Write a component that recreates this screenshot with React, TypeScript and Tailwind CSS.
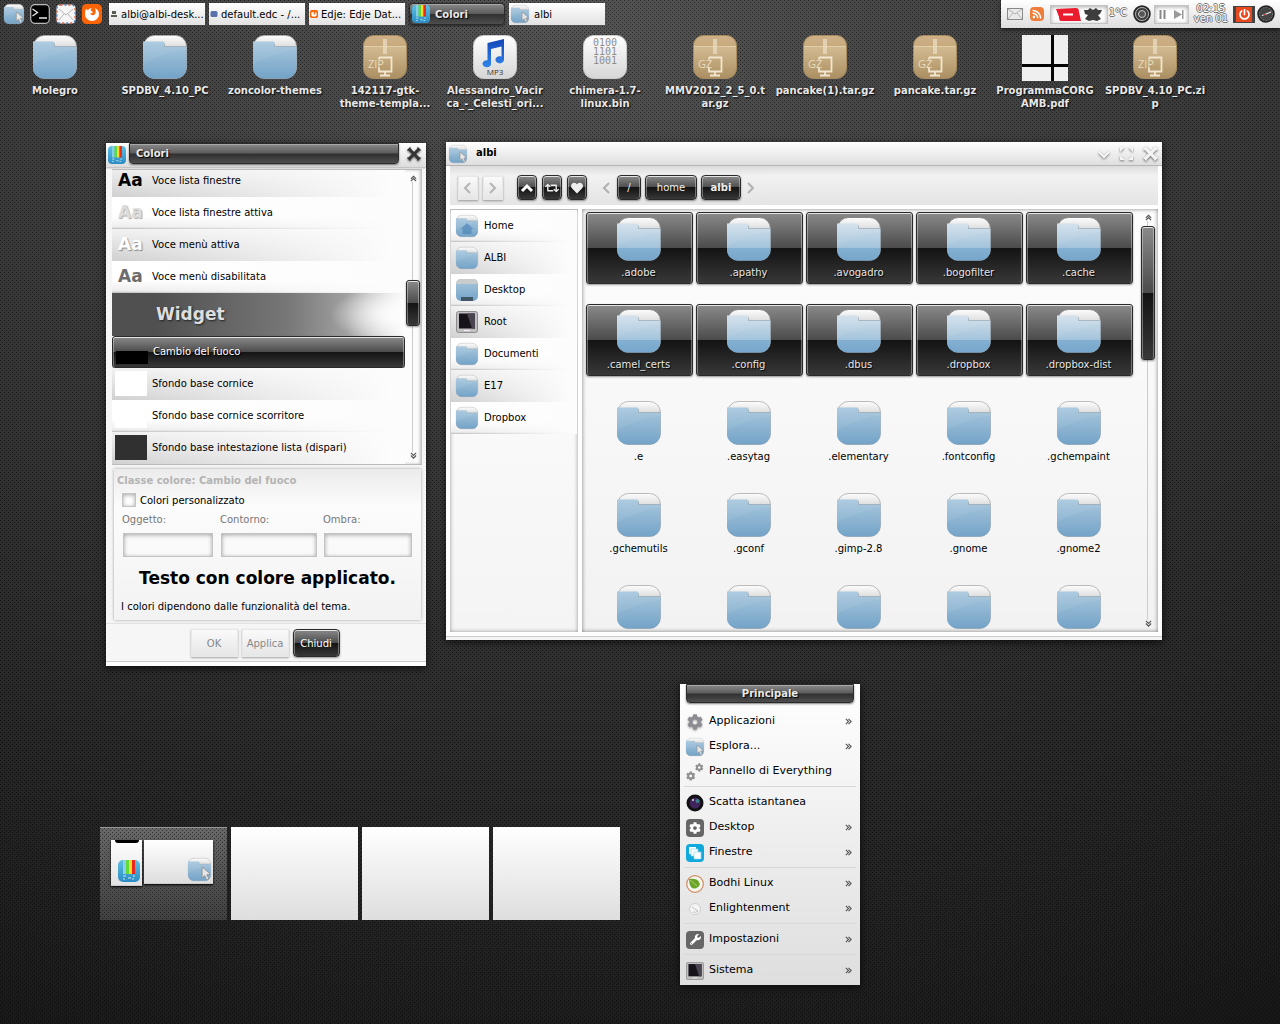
import { useState, type ReactNode } from 'react'
import clsx from 'clsx'
import { FaCog, FaHeart, FaPowerOff, FaRss, FaWrench, FaRetweet } from 'react-icons/fa'

type DesktopFile = { lines: string[]; icon: ReactNode }
type MenuEntry = { label: string; icon: ReactNode; sub?: boolean }

const GLOSS =
  'border border-[#2a2a2a] bg-[linear-gradient(#8a8a8a,#4b4b4b_50%,#131313_50%,#383838)] shadow-[inset_0_1px_0_#e4e4e4,inset_1px_0_0_rgba(255,255,255,0.35),inset_-1px_0_0_rgba(255,255,255,0.35),0_1px_2px_rgba(0,0,0,0.4)]'
const TITLE_GLOSS =
  'border border-[#2a2a2a] bg-[linear-gradient(#8a8a8a,#5c5c5c_48%,#303030_52%,#4e4e4e)] shadow-[inset_0_1px_0_#a8a8a8,0_1px_2px_rgba(0,0,0,0.5)] text-[#eaeaea] [text-shadow:1px_1px_1px_#000]'
const WELL = 'border border-[#c4c4c4] shadow-[inset_0_1px_4px_rgba(0,0,0,0.35)]'
const FLAT_BUTTON =
  'border border-[#e8e8e8] bg-linear-to-b from-[#fafafa] to-[#e6e6e6] shadow-[0_1px_2px_rgba(0,0,0,0.35)]'
const ROW_DARK = 'bg-[linear-gradient(to_right,transparent,#fcfcfc_95%),linear-gradient(#f2f2f2,#d0d0d0)]'
const ROW_LIGHT = 'bg-[linear-gradient(to_right,transparent,#fcfcfc_95%),linear-gradient(#ffffff_60%,#ececec_94%,#b8b8b8)]'

/* ---------- icons ---------- */

function Defs() {
  return (
    <svg width="0" height="0" className="absolute" aria-hidden="true">
      <defs>
        <linearGradient id="flap" x1="0" y1="0" x2="0" y2="1">
          <stop offset="0" stopColor="#fdfdfd" />
          <stop offset=".3" stopColor="#d9d9d9" />
          <stop offset="1" stopColor="#bbb" />
        </linearGradient>
        <linearGradient id="blue" x1="0" y1="0" x2="0" y2="1">
          <stop offset="0" stopColor="#a9c8de" />
          <stop offset="1" stopColor="#74a3c7" />
        </linearGradient>
        <linearGradient id="blueLit" x1="0" y1="0" x2="0" y2="1">
          <stop offset="0" stopColor="#d3e1ec" />
          <stop offset=".66" stopColor="#a3c3db" />
          <stop offset=".67" stopColor="#83b0d2" />
          <stop offset="1" stopColor="#76a6cb" />
        </linearGradient>
        <linearGradient id="box" x1="0" y1="0" x2="0" y2="1">
          <stop offset="0" stopColor="#cdb088" />
          <stop offset=".25" stopColor="#c9aa7f" />
          <stop offset=".27" stopColor="#d2ba90" />
          <stop offset="1" stopColor="#ab8f62" />
        </linearGradient>
        <linearGradient id="paper" x1="0" y1="0" x2="0" y2="1">
          <stop offset="0" stopColor="#fff" />
          <stop offset="1" stopColor="#d6d6d6" />
        </linearGradient>
        <linearGradient id="note" x1="0" y1="0" x2="0" y2="1">
          <stop offset="0" stopColor="#1445b8" />
          <stop offset="1" stopColor="#2f86ea" />
        </linearGradient>
        <linearGradient id="sky" x1="0" y1="0" x2="0" y2="1">
          <stop offset="0" stopColor="#5cc0e2" />
          <stop offset="1" stopColor="#2c8cc4" />
        </linearGradient>
      </defs>
    </svg>
  )
}

const BODY = 'M0 6.500H20q1.500 0 1.500 2v3h22V33A10.500 10.500 0 0 1 33 43.500H11A10.500 10.500 0 0 1 0 33Z'

function Folder({ size = 44, lit = false, children }: { size?: number; lit?: boolean; children?: ReactNode }) {
  return (
    <svg width={size} height={size} viewBox="0 0 44 44" className="shrink-0 overflow-visible">
      <rect x=".5" y=".5" width="43" height="43" rx="11" fill="url(#flap)" stroke={lit ? '#777' : '#a9a9a9'} strokeWidth=".8" />
      <path d={BODY} fill={lit ? 'url(#blueLit)' : 'url(#blue)'} />
      <path d="M0 6.500H20q1.500 0 1.500 2v3h22v3Q24 17 0 29Z" fill="#fff" opacity=".06" />
      <path d="M21.500 8.500v3h22" fill="none" stroke="#8b9aa5" strokeWidth=".8" opacity=".7" />
      {children}
    </svg>
  )
}

function FolderCursor({ size = 20 }: { size?: number }) {
  return (
    <Folder size={size}>
      <path d="M27 17v21l5-4.500 4 8.500 4-2-4-8 7-1Z" fill="#e6e6e6" stroke="#8c8c8c" strokeWidth="1.500" />
    </Folder>
  )
}

function Archive({ kind }: { kind: string }) {
  return (
    <svg width="44" height="44" viewBox="0 0 44 44" className="font-normal [text-shadow:none]">
      <rect x=".5" y=".5" width="43" height="43" rx="10" fill="url(#box)" stroke="#a88c60" />
      <path d="M1 11.500h42" stroke="#e2cda8" strokeWidth="1" />
      <rect x="20" y="4" width="4" height="15" fill="#eadcc2" opacity=".75" />
      <path d="M16 22.500h12.500v14H16v-4M16 22.500v2M22 36.500v3M17 40.500h10" fill="none" stroke="#f2e6cf" strokeWidth="1.800" />
      <text x="5" y="33" fontFamily="Open Sans" fontSize="11" fill="#eadbbd">{kind}</text>
    </svg>
  )
}

function Mp3() {
  return (
    <svg width="44" height="44" viewBox="0 0 44 44" className="font-normal [text-shadow:none]">
      <rect x=".5" y=".5" width="43" height="43" rx="10" fill="url(#paper)" stroke="#ccc" />
      <path d="M14.500 8 31 4v20.500a4.300 3.600 0 1 1-2.500-3V11.500L18 14v14a4.300 3.600 0 1 1-3.500-2.800Z" fill="url(#note)" />
      <text x="22" y="40" textAnchor="middle" fontFamily="Open Sans" fontSize="8" fill="#333">MP3</text>
    </svg>
  )
}

function Binary() {
  return (
    <svg width="44" height="44" viewBox="0 0 44 44" className="font-normal [text-shadow:none]">
      <rect x=".5" y=".5" width="43" height="43" rx="10" fill="url(#paper)" stroke="#ccc" />
      <g fontFamily="DejaVu Sans Mono" fontSize="10" fill="#8e8e8e" textAnchor="middle">
        <text x="22" y="11">0100</text>
        <text x="22" y="20">1101</text>
        <text x="22" y="29">1001</text>
      </g>
    </svg>
  )
}

function PdfPreview() {
  return (
    <svg width="46" height="46" viewBox="0 0 46 46">
      <path d="M0 0h46v46H0Z" fill="#050505" />
      <path d="M0 0h29v29H0ZM32 0h14v29H32ZM0 32h29v14H0ZM32 32h14v14H32Z" fill="#efefef" />
    </svg>
  )
}

function ColorsIcon({ size = 20 }: { size?: number }) {
  return (
    <svg width={size} height={size} viewBox="0 0 22 22" className="shrink-0">
      <rect width="22" height="22" rx="5" fill="url(#sky)" />
      <path d="M5 0h3v14H5Z" fill="#8ed0e8" />
      <path d="M8 0h3v14H8Z" fill="#5fdc3c" />
      <path d="M11 0h3v14h-3Z" fill="#ffd52e" />
      <path d="M14 0h3v14h-3Z" fill="#e8291d" />
      <path d="M5 16h3M10 18h3M14 19h2M5 19h2M15 16h2" stroke="#bfe6f5" />
    </svg>
  )
}

function Terminal() {
  return (
    <svg width="20" height="20" viewBox="0 0 20 20">
      <rect x=".7" y=".7" width="18.600" height="18.600" rx="4" fill="#000" stroke="#bbb" strokeWidth="1.200" />
      <path d="m2.500 5 5 3.500-5 3.500M9 14h8" fill="none" stroke="#e8e8e8" strokeWidth="1.300" />
    </svg>
  )
}

function Mail() {
  return (
    <svg width="20" height="20" viewBox="0 0 20 20">
      <rect x=".5" y=".5" width="19" height="19" rx="4" fill="#f6f6f6" />
      <rect x="1" y="1" width="18" height="18" rx="3.500" fill="none" stroke="#e4573c" strokeWidth="1.300" strokeDasharray="2 6" />
      <rect x="1" y="1" width="18" height="18" rx="3.500" fill="none" stroke="#4d86c8" strokeWidth="1.300" strokeDasharray="2 6" strokeDashoffset="4" />
      <path d="m3 5 7 6 7-6M3 16l5-6M17 16l-5-6" fill="none" stroke="#b5b5b5" />
    </svg>
  )
}

function Firefox({ size = 20 }: { size?: number }) {
  return (
    <svg width={size} height={size} viewBox="0 0 20 20" className="shrink-0">
      <rect width="20" height="20" rx="4.500" fill="#fb6508" />
      <path d="M4 5q1 1 2 1 2-2 4-2-2 1-1 3l2 1q-1 2-3 1 1 3 4 2 3-2 1-7 4 2 4 6a7 7 0 0 1-14 0Q3 7 4 5Z" fill="#fff" />
    </svg>
  )
}

function Monitor({ size = 22 }: { size?: number }) {
  return (
    <svg width={size} height={size} viewBox="0 0 22 22">
      <rect x=".5" y=".5" width="21" height="21" rx="2" fill="#c2bfc2" stroke="#8e8e8e" />
      <rect x="3" y="2.500" width="16" height="15" fill="#17131b" />
      <path d="M11 2.500h8v15h-3Z" fill="#4a4350" />
      <path d="M8 19.500h6" stroke="#eee" />
    </svg>
  )
}

function DesktopIcon() {
  return (
    <svg width="22" height="22" viewBox="0 0 22 22">
      <rect width="22" height="22" rx="5" fill="url(#blue)" />
      <path d="M0 5q0-5 5-5h12q5 0 5 5Z" fill="#c9cccd" />
      <rect x="5" y="18" width="12" height="4" fill="#3f5668" />
    </svg>
  )
}

function HomeFolder() {
  return (
    <Folder size={22}>
      <path d="M22 16 9 28h4v10h18V28h4Z" fill="#5088b8" opacity=".7" />
    </Folder>
  )
}

function Cross({ color, size = 14 }: { color: string; size?: number }) {
  return (
    <svg width={size} height={size} viewBox="0 0 14 14" className="drop-shadow-[0_1px_1px_rgba(0,0,0,0.6)]">
      <path d="M2 2l10 10M12 2 2 12" stroke={color} strokeWidth="3" />
      <path d="M.5 3.500 3.500.5M10.500.5l3 3M.5 10.500l3 3M10.500 13.500l3-3" stroke={color} strokeWidth="1.300" />
    </svg>
  )
}

function Chevron({ dir, className = '' }: { dir: 'left' | 'right' | 'down'; className?: string }) {
  const d = { left: 'M8 1 3 6l5 5', right: 'M3 1l5 5-5 5', down: 'M1 4l5 5 5-5' }[dir]
  return (
    <svg width="12" height="12" viewBox="0 0 12 12" className={className}>
      <path d={d} fill="none" stroke="currentColor" strokeWidth="2" />
    </svg>
  )
}

function DoubleArrow({ dir }: { dir: 'up' | 'down' | 'right' }) {
  const d = { up: 'M1 4.500 4 1.500l3 3M1 7 4 4l3 3', down: 'M1 1l3 3 3-3M1 4l3 3 3-3', right: 'M1 1l3 3-3 3M4 1l3 3-3 3' }[dir]
  return (
    <svg width="7" height="7" viewBox="0 0 8 8" className="shrink-0">
      <path d={d} fill="none" stroke="#555" strokeWidth="1.300" />
    </svg>
  )
}

function Badge({ className, children }: { className: string; children: ReactNode }) {
  return <span className={clsx('flex size-[18px] items-center justify-center text-white', className)}>{children}</span>
}

/* ---------- panel ---------- */

const TASKS: { label: string; icon: ReactNode }[] = [
  {
    label: 'albi@albi-desk...',
    icon: <svg width="8" height="8" viewBox="0 0 8 8"><path d="M2 1h4v3H2ZM1 5h6v2H1Z" fill="#555c50" /></svg>,
  },
  {
    label: 'default.edc - /...',
    icon: <svg width="8" height="8" viewBox="0 0 8 8"><rect x=".5" y="1" width="7" height="6" rx="1.500" fill="#5a72ac" /></svg>,
  },
  { label: 'Edje: Edje Dat...', icon: <Firefox size={8} /> },
  { label: 'Colori', icon: <ColorsIcon size={18} /> },
  { label: 'albi', icon: <FolderCursor size={18} /> },
]

function TaskBar() {
  const [active, setActive] = useState('Colori')
  return (
    <nav className="flex items-center gap-[6px] pt-[3px] pl-[4px]">
      <button aria-label="File manager"><FolderCursor /></button>
      <button aria-label="Terminale"><Terminal /></button>
      <button aria-label="Posta"><Mail /></button>
      <button aria-label="Firefox"><Firefox /></button>
      <div className="flex gap-1 pl-px">
        {TASKS.map(({ label, icon }, i) => (
          <button
            key={label}
            onClick={() => setActive(label)}
            className={clsx(
              'flex h-[22px] w-24 items-center overflow-hidden whitespace-nowrap',
              i < 3 ? 'gap-[3px] pl-px' : 'gap-[5px] pl-[2px]',
              active === label ? [TITLE_GLOSS, 'rounded font-bold'] : 'bg-linear-to-b from-white to-[#e2e2e2]'
            )}
          >
            {icon}
            {label}
          </button>
        ))}
      </div>
    </nav>
  )
}

function Tray() {
  const outlined = 'text-white [text-shadow:1px_0_#777,-1px_0_#777,0_1px_#777,0_-1px_#777]'
  return (
    <div className="flex h-7 items-center bg-linear-to-b from-white to-[#dedede] pl-[6px] pr-[5px] shadow-[0_2px_4px_rgba(0,0,0,0.5)]">
      <svg width="16" height="12" viewBox="0 0 16 12">
        <rect x=".5" y=".5" width="15" height="11" fill="#e9e9e9" stroke="#8a8a8a" />
        <path d="m1 1 7 5 7-5M1 11l5-6M15 11l-5-6" fill="none" stroke="#b3b3b3" />
      </svg>
      <span className="ml-[7px] flex size-[14px] items-center justify-center rounded-sm bg-[#ef7d3a] text-white">
        <FaRss size={10} />
      </span>
      <div className={clsx('ml-[6px] flex h-[19px] w-[58px] items-center justify-center gap-[3px] bg-white', WELL)}>
        <svg width="25" height="13" viewBox="0 0 25 13">
          <path d="M0 1 20 0q3 0 3 4l2 9H5Q3 13 3 9Z" fill="#ea1c2e" />
          <path d="M7 6.500h10" stroke="#fff" strokeWidth="2" />
        </svg>
        <svg width="18" height="13" viewBox="0 0 18 13">
          <path d="M0 2h4l2-2 3 2 3-2 2 2h4l-2 4-2 1 3 4-4 2-4-1-4 1-4-2 3-4-3-1Z" fill="#3d3d3d" />
        </svg>
      </div>
      <span className={clsx('ml-px pb-[3px]', outlined)}>1°C</span>
      <svg width="18" height="18" viewBox="0 0 18 18" className="ml-[6px]">
        <circle cx="9" cy="9" r="8" fill="#3a3a3a" stroke="#222" strokeWidth="1.500" />
        <circle cx="9" cy="9" r="6.500" fill="none" stroke="#b5b5b5" />
        <circle cx="9" cy="9" r="3.500" fill="#555" stroke="#d0d0d0" />
      </svg>
      <div className={clsx('ml-[3px] flex h-[19px] w-[35px] items-center justify-center gap-[8px] bg-white', WELL)}>
        <svg width="7" height="9" viewBox="0 0 7 9"><path d="M1.500 0v9M5.500 0v9" stroke="#888" strokeWidth="2" /></svg>
        <svg width="10" height="9" viewBox="0 0 10 9"><path d="m0 0 8 4.500L0 9ZM8 0h1.500v9H8Z" fill="#999" /></svg>
      </div>
      <div className={clsx('ml-1 flex w-9 flex-col items-center whitespace-nowrap leading-[10px]', outlined)}>
        <span>02:15</span>
        <span>ven 01</span>
      </div>
      <button aria-label="Spegni" className="ml-[4px] flex h-[17px] w-[22px] items-center justify-center bg-[#444]">
        <span className="flex h-[15px] w-[16px] items-center justify-center bg-[#e8491f] text-white"><FaPowerOff size={11} /></span>
      </button>
      <svg width="18" height="18" viewBox="0 0 18 18" className="ml-[2px]">
        <circle cx="9" cy="9" r="8" fill="#444" stroke="#222" strokeWidth="1.500" />
        <circle cx="9" cy="9" r="6.500" fill="none" stroke="#888" strokeDasharray="1 2" />
        <path d="M5 10.500 9 9l5-2" stroke="#eee" strokeWidth="1.300" />
        <path d="M9 9 6 10" stroke="#d33" />
      </svg>
    </div>
  )
}

/* ---------- desktop ---------- */

const FILES: DesktopFile[] = [
  { lines: ['Molegro'], icon: <Folder /> },
  { lines: ['SPDBV_4.10_PC'], icon: <Folder /> },
  { lines: ['zoncolor-themes'], icon: <Folder /> },
  { lines: ['142117-gtk-', 'theme-templa...'], icon: <Archive kind="ZIP" /> },
  { lines: ['Alessandro_Vacir', 'ca_-_Celesti_ori...'], icon: <Mp3 /> },
  { lines: ['chimera-1.7-', 'linux.bin'], icon: <Binary /> },
  { lines: ['MMV2012_2_5_0.t', 'ar.gz'], icon: <Archive kind="GZ" /> },
  { lines: ['pancake(1).tar.gz'], icon: <Archive kind="GZ" /> },
  { lines: ['pancake.tar.gz'], icon: <Archive kind="GZ" /> },
  { lines: ['ProgrammaCORG', 'AMB.pdf'], icon: <PdfPreview /> },
  { lines: ['SPDBV_4.10_PC.zi', 'p'], icon: <Archive kind="ZIP" /> },
]

function DesktopFiles() {
  return (
    <ul className="flex flex-wrap pt-[7px]">
      {FILES.map(({ lines, icon }) => (
        <li key={lines[0]} className="flex w-[110px] flex-col items-center text-center font-bold leading-[13px] text-[#e8e8e8] [text-shadow:1px_1px_2px_#000]">
          <span className="flex h-[49px] items-start">{icon}</span>
          {lines.map((l) => <span key={l} className="whitespace-nowrap">{l}</span>)}
        </li>
      ))}
    </ul>
  )
}

/* ---------- colors window ---------- */

function ListText({ label, sample }: { label: string; sample: string }) {
  return (
    <>
      <span className={clsx('w-10 pl-[6px] text-[17px] font-bold', sample)}>Aa</span>
      {label}
    </>
  )
}

function Swatch({ label, color }: { label: string; color: string }) {
  return (
    <>
      <span className={clsx('mr-[5px] ml-[3px] h-[25px] w-8', color)} />
      {label}
    </>
  )
}

function Scrollbar({ thumb }: { thumb: string }) {
  return (
    <div className="flex w-[14px] shrink-0 flex-col items-center py-[5px]">
      <DoubleArrow dir="up" />
      <div className="flex w-full flex-1 flex-col bg-[linear-gradient(to_right,transparent_6px,#ccc_6px,#ccc_7px,transparent_7px)]">
        <div className={clsx('w-full rounded-[3px]', GLOSS, thumb)} />
      </div>
      <DoubleArrow dir="down" />
    </div>
  )
}

function ColorField({ id, label, width }: { id: string; label: string; width: string }) {
  return (
    <div className={clsx('flex flex-col gap-[7px]', width)}>
      <label htmlFor={id} className="leading-[13px] text-[#777]">{label}</label>
      <input id={id} className={clsx('ml-px h-6 w-full bg-[#fafafa]', WELL)} />
    </div>
  )
}

function ColorsWindow() {
  const row = 'flex h-8 shrink-0 items-center pb-px'
  return (
    <section className="absolute top-[143px] left-[106px] w-80 bg-[#f6f6f6] shadow-[0_2px_8px_rgba(0,0,0,0.7)]">
      <header className="flex h-6 items-start bg-linear-to-b from-white to-[#dcdcdc] pr-[5px] pl-[2px] shadow-[0_1px_2px_rgba(0,0,0,0.3)]">
        <span className="pt-[3px]"><ColorsIcon size={18} /></span>
        <h2 className={clsx('ml-[3px] flex h-[21px] flex-1 items-center rounded-b pl-[6px] font-bold', TITLE_GLOSS)}>Colori</h2>
        <button aria-label="Chiudi finestra" className="ml-[8px] pt-1"><Cross color="#333" /></button>
      </header>

      <div className="px-1 pt-[2px] pl-[6px]">
        <div className="flex h-[296px] border-y border-[#bbb] bg-[#fcfcfc] shadow-[inset_-2px_0_3px_rgba(0,0,0,0.25)]">
          <div className="flex flex-1 flex-col justify-end overflow-hidden">
            <div className={clsx(row, ROW_DARK)}><ListText label="Voce lista finestre" sample="text-black" /></div>
            <div className={clsx(row, ROW_LIGHT)}><ListText label="Voce lista finestre attiva" sample="text-[#dcdcdc] [text-shadow:1px_1px_1px_#aaa]" /></div>
            <div className={clsx(row, ROW_DARK)}><ListText label="Voce menù attiva" sample="text-white [text-shadow:1px_1px_1px_#888]" /></div>
            <div className={clsx(row, ROW_LIGHT)}><ListText label="Voce menù disabilitata" sample="text-[#6c6c6c]" /></div>
            <h3 className="flex h-[43px] shrink-0 items-center bg-[radial-gradient(ellipse_75px_30px_at_100%_50%,#fcfcfc_20%,transparent),linear-gradient(to_right,#505050_15%,#777_60%,#a0a0a0_80%,#fcfcfc)] pl-[44px] text-[17px] font-bold text-[#dedede] [text-shadow:1px_1px_2px_#222]">
              Widget
            </h3>
            <div className={clsx(row, GLOSS, 'rounded-[3px] text-white [text-shadow:1px_1px_1px_#000]')}>
              <Swatch label="Cambio del fuoco" color="bg-linear-to-b from-transparent from-50% to-black to-50%" />
            </div>
            <div className={clsx(row, ROW_DARK)}><Swatch label="Sfondo base cornice" color="bg-white" /></div>
            <div className={clsx(row, ROW_LIGHT)}><Swatch label="Sfondo base cornice scorritore" color="bg-white" /></div>
            <div className={clsx(row, ROW_DARK)}><Swatch label="Sfondo base intestazione lista (dispari)" color="bg-[#303030]" /></div>
          </div>
          <div className="flex pr-[2px] pl-px"><Scrollbar thumb="mt-[98px] h-[46px]" /></div>
        </div>
      </div>

      <fieldset className="mt-1 mr-[5px] ml-2 bg-linear-to-b from-[#ebebeb] via-[#fcfcfc] via-25% to-[#f2f2f2] pb-[5px] shadow-[0_0_3px_rgba(0,0,0,0.35)]">
        <p className="pt-[5px] pl-[3px] font-bold leading-[13px] text-[#b4b4b4]">Classe colore: Cambio del fuoco</p>
        <label className="flex h-[26px] items-center gap-[4px] pl-2">
          <input type="checkbox" className={clsx('size-[14px] appearance-none bg-white', WELL)} />
          Colori personalizzato
        </label>
        <div className="flex pl-2">
          <ColorField id="obj" label="Oggetto:" width="mr-2 w-[90px]" />
          <ColorField id="out" label="Contorno:" width="mr-[7px] w-24" />
          <ColorField id="shd" label="Ombra:" width="w-[88px]" />
        </div>
        <p className="pt-[9px] pb-[7px] text-center text-[17px] leading-[25px] font-bold text-black">Testo con colore applicato.</p>
        <p className="pl-[7px] leading-[17px]">I colori dipendono dalle funzionalità del tema.</p>
      </fieldset>

      <div className="mt-[3px] flex justify-center gap-1 border-t border-[#e2e2e2] pt-[5px] pr-[2px] text-[#888]">
        <button className={clsx('h-7 w-[47px]', FLAT_BUTTON)}>OK</button>
        <button className={clsx('h-7 w-[47px]', FLAT_BUTTON)}>Applica</button>
        <button className={clsx('h-7 w-[47px] rounded text-white', GLOSS)}>Chiudi</button>
      </div>
      <div className="mt-1 h-[5px] border-t border-[#ccc] bg-white" />
    </section>
  )
}

/* ---------- file manager ---------- */

const PLACES = [
  { label: 'Home', icon: <HomeFolder /> },
  { label: 'ALBI', icon: <Folder size={22} /> },
  { label: 'Desktop', icon: <DesktopIcon /> },
  { label: 'Root', icon: <Monitor /> },
  { label: 'Documenti', icon: <Folder size={22} /> },
  { label: 'E17', icon: <Folder size={22} /> },
  { label: 'Dropbox', icon: <Folder size={22} /> },
]

const FOLDERS = [
  '.adobe', '.apathy', '.avogadro', '.bogofilter', '.cache',
  '.camel_certs', '.config', '.dbus', '.dropbox', '.dropbox-dist',
  '.e', '.easytag', '.elementary', '.fontconfig', '.gchempaint',
  '.gchemutils', '.gconf', '.gimp-2.8', '.gnome', '.gnome2',
  '', '', '', '', '',
]
const SELECTED = 10

function FileManager() {
  const dark = clsx('flex h-[25px] items-center justify-center rounded text-[#eee]', GLOSS)
  const flat = clsx('flex h-6 w-5 items-center justify-center text-[#b4b4b4]', FLAT_BUTTON)
  return (
    <section className="absolute top-[142px] left-[446px] w-[716px] bg-white shadow-[0_2px_8px_rgba(0,0,0,0.7)]">
      <header className="flex h-6 items-center border-b border-[#b5b5b5] bg-linear-to-b from-white to-[#dedede] pr-1 pl-[3px]">
        <FolderCursor size={18} />
        <h2 className="ml-[9px] flex-1 pb-[2px] font-bold">albi</h2>
        <div className="flex items-center gap-[9px] text-[#f4f4f4]">
          <button aria-label="Riduci"><Chevron dir="down" className="drop-shadow-[0_1px_1px_rgba(0,0,0,0.5)]" /></button>
          <button aria-label="Ingrandisci">
            <svg width="15" height="15" viewBox="0 0 15 15" className="drop-shadow-[0_1px_1px_rgba(0,0,0,0.5)]">
              <path d="M1 1h5L1 6ZM14 1v5L9 1ZM1 14V9l5 5ZM14 14H9l5-5Z" fill="currentColor" />
            </svg>
          </button>
          <button aria-label="Chiudi"><Cross color="#f4f4f4" size={15} /></button>
        </div>
      </header>

      <div className="mx-1 flex h-[39px] items-center bg-linear-to-b from-[#dcdcdc] via-[#f2f2f2] via-25% to-[#e4e4e4] pt-1 pl-2">
        <button aria-label="Indietro" className={flat}><Chevron dir="left" /></button>
        <button aria-label="Avanti" className={clsx(flat, 'ml-[5px]')}><Chevron dir="right" /></button>
        <div className="ml-[14px] flex gap-[5px]">
          <button aria-label="Su" className={clsx(dark, 'w-5')}>
            <svg width="14" height="10" viewBox="0 0 14 10"><path d="m2 8 5-5 5 5" fill="none" stroke="#fff" strokeWidth="3" /></svg>
          </button>
          <button aria-label="Aggiorna" className={clsx(dark, 'w-5')}><FaRetweet size={14} /></button>
          <button aria-label="Preferiti" className={clsx(dark, 'w-5')}><FaHeart size={12} /></button>
        </div>
        <div className="ml-[14px] flex items-center gap-1 text-[#b0b0b0]">
          <Chevron dir="left" />
          <button className={clsx(dark, 'w-6')}>/</button>
          <button className={clsx(dark, 'w-[52px]')}>home</button>
          <button className={clsx(dark, 'w-10 font-bold')}>albi</button>
          <Chevron dir="right" />
        </div>
      </div>

      <div className="flex gap-1 px-1 pt-1">
        <ul className="h-[423px] w-32 shrink-0 border-t border-[#bbb] bg-linear-to-b from-white to-[#f4f4f4] px-px shadow-[inset_0_0_4px_rgba(0,0,0,0.4)]">
          {PLACES.map(({ label, icon }, i) => (
            <li key={label} className={clsx('flex h-8 items-center gap-[6px] pl-[5px]', i % 2 ? ROW_DARK : ROW_LIGHT)}>
              {icon}
              <a href="#" className="pb-px">{label}</a>
            </li>
          ))}
        </ul>
        <div className="flex h-[423px] flex-1 justify-between overflow-hidden bg-linear-to-b from-[#fdfdfd] to-[#f2f2f2] pr-[3px] pl-1 shadow-[inset_0_0_4px_rgba(0,0,0,0.5)]">
          <ul className="grid grid-cols-[repeat(5,107px)] content-start gap-x-[3px] gap-y-5 pt-[3px]">
            {FOLDERS.map((name, i) => (
              <li
                key={i}
                className={clsx(
                  'flex h-[72px] flex-col items-center rounded-[3px] pt-1 pr-[2px]',
                  i < SELECTED ? [GLOSS, 'text-[#e6e6e6] [text-shadow:1px_1px_1px_#000]'] : 'border border-transparent'
                )}
              >
                <Folder lit={i < SELECTED} />
                <span className="pt-[5px] leading-[13px]">{name}</span>
              </li>
            ))}
          </ul>
          <Scrollbar thumb="mt-[5px] h-[134px]" />
        </div>
      </div>
      <div className="mt-1 h-1 border-t border-[#ccc] bg-[#f4f4f4]" />
    </section>
  )
}

/* ---------- main menu ---------- */

const MENU: MenuEntry[][] = [
  [
    { label: 'Applicazioni', sub: true, icon: <Badge className="drop-shadow-[0_1px_1px_rgba(0,0,0,0.3)]"><FaCog size={16} color="#8c8c92" /></Badge> },
    { label: 'Esplora...', sub: true, icon: <FolderCursor size={18} /> },
    {
      label: 'Pannello di Everything',
      icon: (
        <span className="flex size-[18px] items-end text-[#8f8f8f]">
          <FaCog size={10} />
          <FaCog size={9} className="self-start" />
        </span>
      ),
    },
  ],
  [
    {
      label: 'Scatta istantanea',
      icon: (
        <svg width="18" height="18" viewBox="0 0 18 18">
          <circle cx="9" cy="9" r="8.500" fill="#111" />
          <circle cx="9" cy="9" r="5.500" fill="#41245c" />
          <circle cx="11.500" cy="7" r="2" fill="#3a8088" />
          <circle cx="7" cy="6" r="1" fill="#ddd" />
        </svg>
      ),
    },
    { label: 'Desktop', sub: true, icon: <Badge className="rounded bg-[#666]"><FaCog size={12} /></Badge> },
    {
      label: 'Finestre',
      sub: true,
      icon: (
        <Badge className="rounded bg-[#0fa9dc]">
          <svg width="14" height="14" viewBox="0 0 14 14">
            <path d="M1 1h7v7H1Z" fill="#fff" />
            <path d="M3 3h7v7H3Z" fill="#fff" stroke="#8ed6ee" strokeWidth=".7" />
            <path d="M6 6h7v7H6Z" fill="#fff" stroke="#8ed6ee" strokeWidth=".7" />
          </svg>
        </Badge>
      ),
    },
  ],
  [
    {
      label: 'Bodhi Linux',
      sub: true,
      icon: (
        <svg width="18" height="18" viewBox="0 0 18 18">
          <circle cx="9" cy="9" r="8.300" fill="#f6f6f0" stroke="#d08a62" strokeWidth="1.200" />
          <path d="M3 4q8-1 10 3 2 3-1 5-4 3-7 0Q3 9 3 4Z" fill="#6aa52a" />
          <path d="m4 5 7 6" stroke="#a8cf6c" />
        </svg>
      ),
    },
    {
      label: 'Enlightenment',
      sub: true,
      icon: (
        <svg width="18" height="18" viewBox="0 0 18 18">
          <circle cx="9" cy="9" r="5.500" fill="#f4f4f4" stroke="#cfcfcf" />
          <path d="m6 7 6 4M7 12q3 1 5-1" fill="none" stroke="#c2c2c2" />
        </svg>
      ),
    },
  ],
  [{ label: 'Impostazioni', sub: true, icon: <Badge className="rounded bg-[#666]"><FaWrench size={11} /></Badge> }],
  [{ label: 'Sistema', sub: true, icon: <Monitor size={18} /> }],
]

function MainMenu() {
  return (
    <section className="absolute top-[684px] left-[680px] w-[180px] bg-linear-to-b from-white to-[#dedede] px-1 pb-[2px] text-[11px] shadow-[0_2px_8px_rgba(0,0,0,0.7)]">
      <h2 className={clsx('mx-[2px] mb-[6px] flex h-[19px] items-center justify-center rounded-b text-[10px] font-bold', TITLE_GLOSS)}>
        Principale
      </h2>
      {MENU.map((group, i) => (
        <ul key={i} className={clsx(i > 0 && 'mt-[2px] border-t border-[#d8d8d8] pt-[3px]')}>
          {group.map(({ label, icon, sub }) => (
            <li key={label}>
              <button className="flex h-[25px] w-full items-center gap-[5px] pr-1 pl-[2px] text-left">
                {icon}
                <span className="flex-1">{label}</span>
                {sub && <DoubleArrow dir="right" />}
              </button>
            </li>
          ))}
        </ul>
      ))}
    </section>
  )
}

/* ---------- pager ---------- */

// two staggered 1px dots per 4px tile
const CARBON =
  'bg-[conic-gradient(at_1px_1px,transparent_75%,rgba(0,0,0,0.5)_0),conic-gradient(at_1px_1px,transparent_75%,rgba(0,0,0,0.5)_0)] bg-[length:4px_4px] bg-[position:0_0,2px_2px]'

function Pager() {
  const desk = 'h-[93px] w-[127px]'
  return (
    <div className="absolute top-[827px] left-[100px] flex gap-1">
      <button aria-label="Desktop 1" className={clsx(desk, 'bg-linear-to-b from-[#686868] to-[#404040]')}>
        <span className={clsx('flex size-full items-start gap-[2px] border-t border-[#999] pt-3 pl-[11px]', CARBON)}>
          <span className="flex h-[46px] w-[31px] flex-col items-end justify-between border-b border-[#ccc] bg-linear-to-b from-white to-[#e2e2e2] px-[2px] pb-[3px] shadow-[0_1px_2px_#000]">
            <span className="h-[3px] w-6 self-center rounded-b bg-black" />
            <ColorsIcon size={22} />
          </span>
          <span className="flex h-11 w-[69px] items-end justify-end border-b border-[#ccc] bg-linear-to-b from-white to-[#dedede] pr-[2px] pb-[2px] shadow-[0_1px_2px_#000]">
            <FolderCursor size={23} />
          </span>
        </span>
      </button>
      <button aria-label="Desktop 2" className={clsx(desk, 'bg-linear-to-b from-white to-[#dedede]')} />
      <button aria-label="Desktop 3" className={clsx(desk, 'bg-linear-to-b from-white to-[#dedede]')} />
      <button aria-label="Desktop 4" className={clsx(desk, 'bg-linear-to-b from-white to-[#dedede]')} />
    </div>
  )
}

export default function App() {
  return (
    <div className="bg-[radial-gradient(ellipse_120%_110%_at_45%_0%,#545454,#343434_50%,#181818)] font-['DejaVu_Sans',sans-serif] text-[10px] text-black">
      <Defs />
      <main className={clsx('relative min-h-screen overflow-hidden', CARBON)}>
        <div className="flex items-start justify-between">
          <TaskBar />
          <Tray />
        </div>
        <DesktopFiles />
        <ColorsWindow />
        <FileManager />
        <MainMenu />
        <Pager />
      </main>
    </div>
  )
}
